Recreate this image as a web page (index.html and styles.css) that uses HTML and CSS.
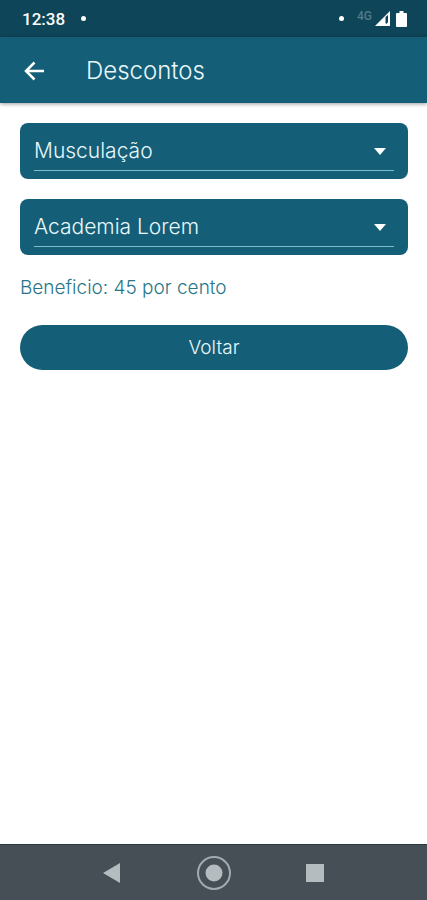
FILE: index.html
```html
<!DOCTYPE html>
<html lang="pt-BR">
<head>
<meta charset="utf-8">
<meta name="viewport" content="width=device-width, initial-scale=1">
<title>Descontos</title>
<link rel="stylesheet" href="styles.css">
</head>
<body>
<div class="status">
  <span class="clock">12:38</span>
  <span class="dot"></span>
  <span class="spacer"></span>
  <span class="dot"></span>
  <span class="network">4G</span>
  <svg class="signal" width="15" height="15" viewBox="0 0 15 15" aria-hidden="true"><path d="M0 15 15 0V15Z" fill="#fff"/><path d="M10.500 6 13 4V11L11.500 13 10.500 12Z" fill="#0e4558"/></svg>
  <svg class="battery" width="11" height="16" viewBox="0 0 11 16" aria-hidden="true"><path d="M3.5 0h4v2H10a1 1 0 0 1 1 1v12a1 1 0 0 1-1 1H1a1 1 0 0 1-1-1V3a1 1 0 0 1 1-1h2.500Z" fill="#fff"/></svg>
</div>
<header class="appbar">
  <button class="back" type="button" aria-label="Voltar">
    <svg width="20" height="20" viewBox="0 0 20 20" fill="none" stroke="#fff" stroke-width="2.500"><path d="M10.500 1.500 2 10l8.500 8.500M2 10h18"/></svg>
  </button>
  <h1 class="title">Descontos</h1>
</header>
<main class="content">
  <div class="field">
    <select class="select" aria-label="Categoria"><option>Musculação</option></select>
    <svg class="caret" width="12" height="7" viewBox="0 0 12 7" aria-hidden="true"><path d="M0 0h12L6 7Z" fill="#fff"/></svg>
  </div>
  <div class="field">
    <select class="select" aria-label="Estabelecimento"><option>Academia Lorem</option></select>
    <svg class="caret" width="12" height="7" viewBox="0 0 12 7" aria-hidden="true"><path d="M0 0h12L6 7Z" fill="#fff"/></svg>
  </div>
  <p class="benefit">Beneficio: 45 por cento</p>
  <button class="submit" type="button">Voltar</button>
</main>
<nav class="navbar" aria-label="Sistema">
  <button type="button" aria-label="Anterior"><svg width="34" height="34" viewBox="0 0 34 34"><path d="M7 17 24 7v20Z" fill="#b4bcc0"/></svg></button>
  <button type="button" aria-label="Início"><svg width="34" height="34" viewBox="0 0 34 34"><circle cx="17" cy="17" r="16" fill="none" stroke="#a2abaf" stroke-width="2"/><circle cx="17" cy="17" r="8.500" fill="#b4bcc0"/></svg></button>
  <button type="button" aria-label="Recentes"><svg width="34" height="34" viewBox="0 0 34 34"><path d="M8 8h18v18H8Z" fill="#b4bcc0"/></svg></button>
</nav>
</body>
</html>
```
FILE: styles.css
```css
* { box-sizing: border-box; }
body {
  margin: 0;
  min-height: 100vh;
  display: flex;
  flex-direction: column;
  background: #fff;
  font-family: Inter, "Open Sans", sans-serif;
  font-weight: 300;
}
button {
  border: 0;
  padding: 0;
  background: none;
  font: inherit;
  color: inherit;
}
svg { display: block; }
.status {
  display: flex;
  align-items: center;
  height: 37px;
  padding: 0 20px 0 22px;
  background: #0e4558;
  color: #fff;
}
.clock {
  margin-right: 16px;
  font: 500 17px/20px Roboto, sans-serif;
}
.dot {
  width: 5px;
  height: 5px;
  border-radius: 50%;
  background: #fff;
}
.spacer { flex: 1; }
.network {
  margin: 0 3px 6px 13px;
  font: 500 12px/14px Roboto, sans-serif;
  color: #4f7b8b;
}
.battery { margin-left: 6px; }
.appbar {
  display: flex;
  align-items: center;
  height: 66px;
  padding: 2px 24px 0;
  background: #145f77;
  color: #eaf7fb;
  box-shadow: 0 1px 4px rgba(0, 0, 0, 0.4);
}
.back { margin-right: 42px; }
.title {
  margin: 0;
  font-size: 24px;
  line-height: 32px;
  font-weight: 300;
}
.content {
  flex: 1;
  display: flex;
  flex-direction: column;
  padding: 20px 19px 20px 20px;
}
.field {
  position: relative;
  margin-bottom: 20px;
  padding: 8px 14px;
  border-radius: 8px;
  background: #145f77;
}
.select {
  display: block;
  appearance: none;
  width: 100%;
  height: 40px;
  padding: 0;
  border: 0;
  border-bottom: 1px solid #7dbccb;
  border-radius: 0;
  background: transparent;
  color: #eaf7fb;
  font: inherit;
  font-size: 21px;
}
.caret {
  position: absolute;
  right: 22px;
  top: 25px;
  pointer-events: none;
}
.benefit {
  margin: 0 0 24px;
  font-size: 19px;
  line-height: 26px;
  color: #287788;
}
.submit {
  height: 45px;
  border-radius: 23px;
  background: #145f77;
  color: #eaf7fb;
  font-size: 19px;
}
.navbar {
  display: flex;
  justify-content: center;
  align-items: center;
  gap: 67px;
  height: 56px;
  border-top: 1px solid #293b42;
  background: #464f55;
}
```
